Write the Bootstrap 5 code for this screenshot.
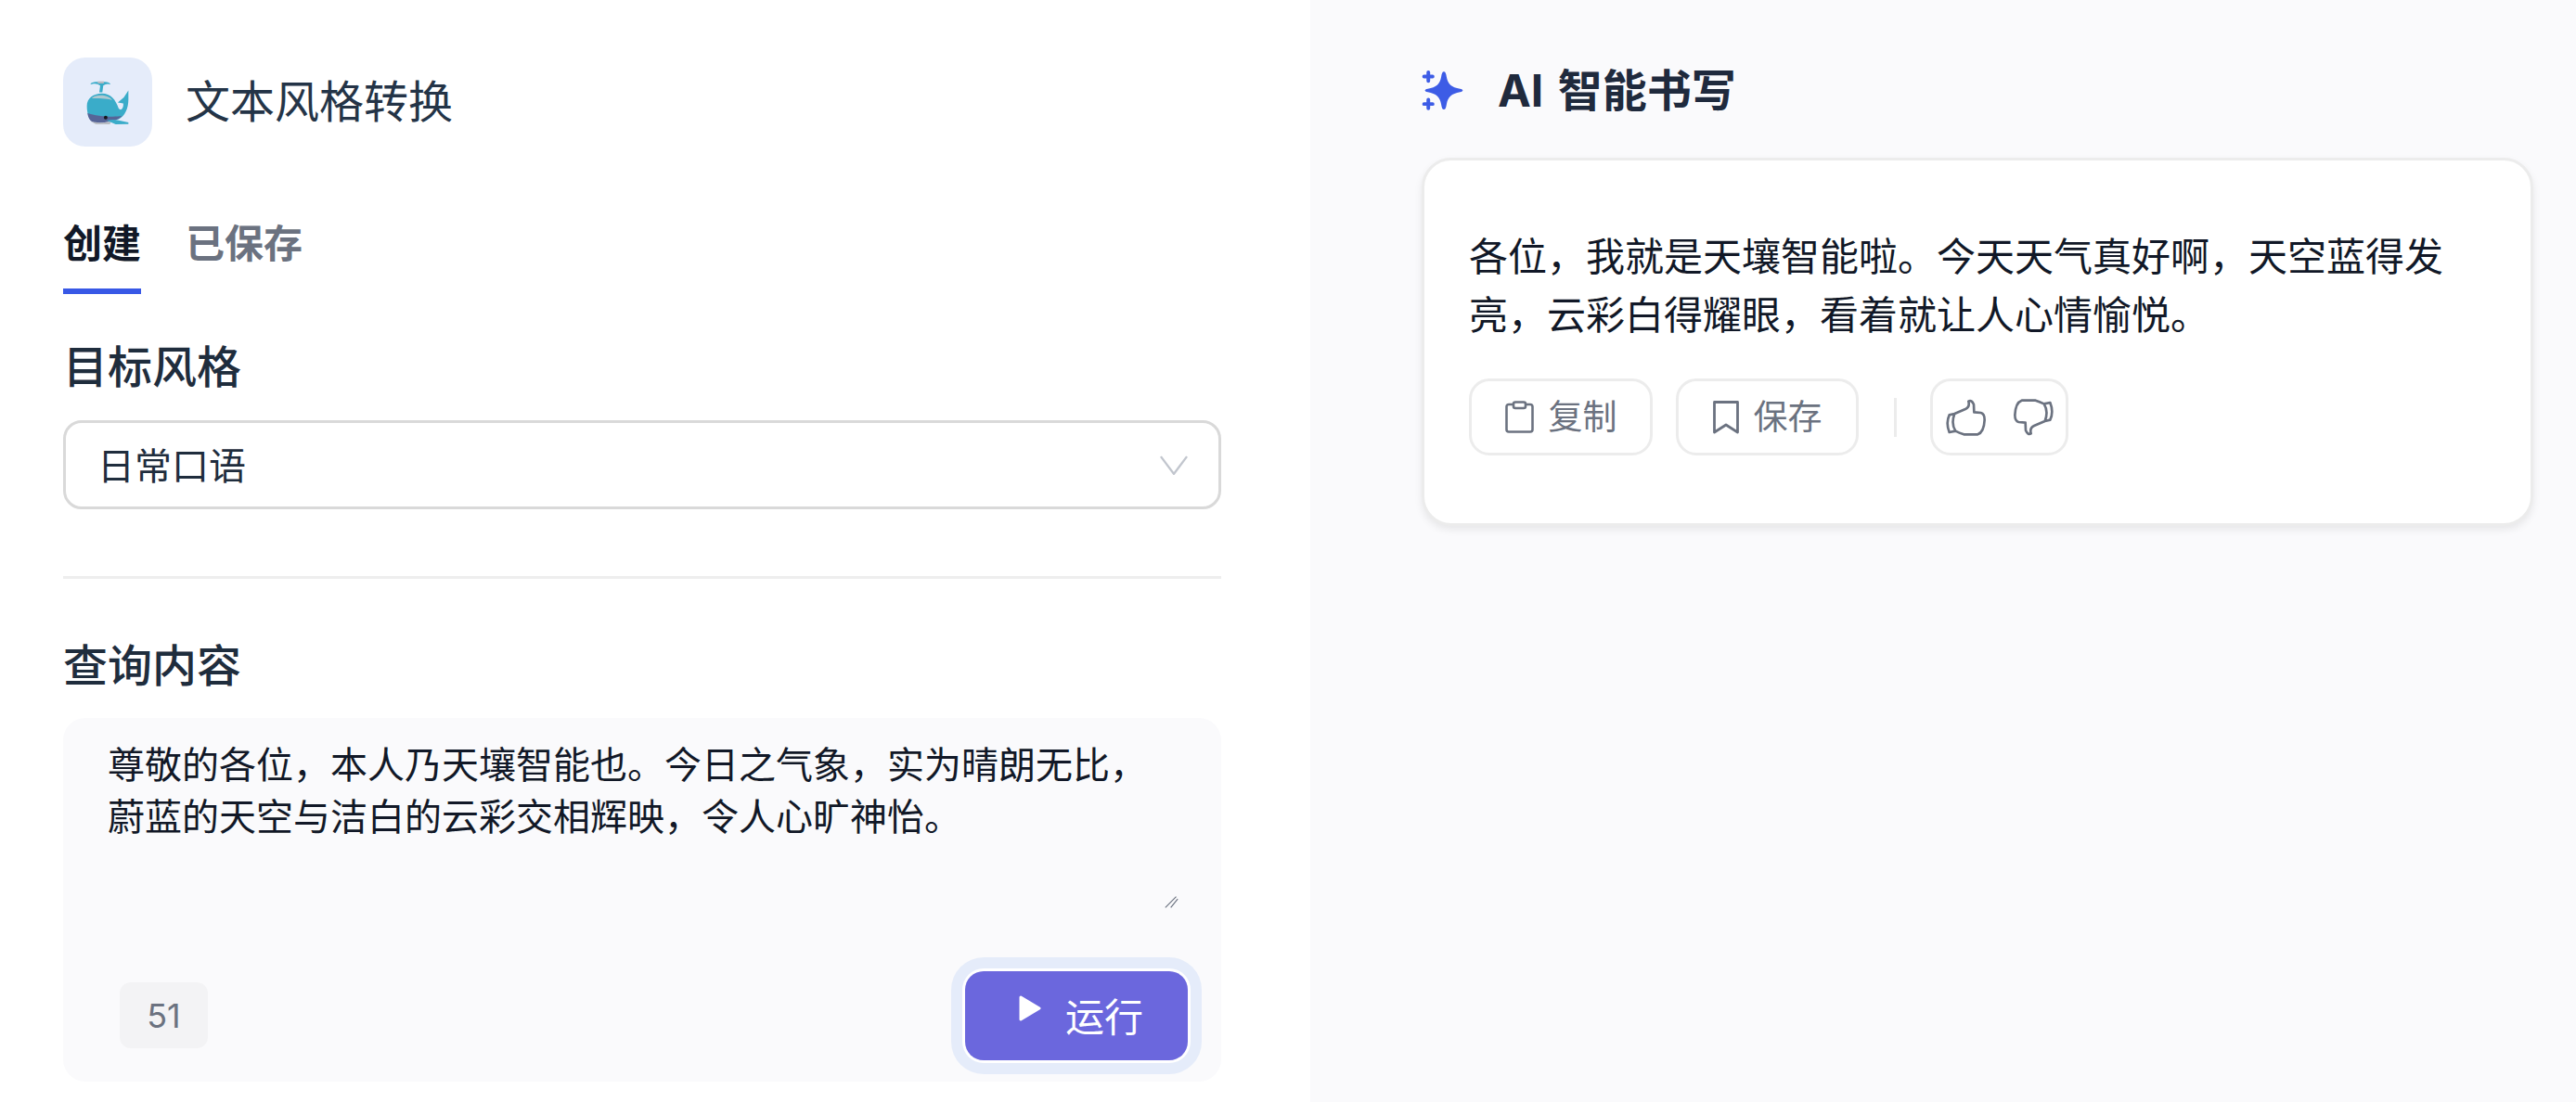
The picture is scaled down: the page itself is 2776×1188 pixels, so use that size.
<!DOCTYPE html>
<html lang="zh-CN">
<head>
<meta charset="utf-8">
<title>文本风格转换</title>
<link href="https://cdn.jsdelivr.net/npm/bootstrap@5.3.0/dist/css/bootstrap.min.css" rel="stylesheet">
<style>
html,body{height:100%}
body{font-family:Inter,"Noto Sans CJK SC",sans-serif;color:#1f2d3d;background:#fff;overflow:hidden}
.shell{height:100vh}
.pane-left{width:1412px;flex:none;padding:62px 96px 0 68px;background:#fff}
.pane-right{flex:1 1 auto;min-width:0;padding:66px 46px 0 120px;background:#fafafc}
.logo-box{width:96px;height:96px;border-radius:24px;background:#e5ecfa}
.app-title{font-size:48px;line-height:64px;font-weight:400;margin:0 0 0 36px;color:#243447}
.tab-row{margin-top:76px;gap:48px}
.tab-item{font-size:42px;line-height:58px;font-weight:700;color:#6b7280;padding-bottom:19px;border-bottom:6px solid transparent}
.tab-item.is-on{color:#111827;border-bottom-color:#3858e6}
.field-title{font-size:48px;line-height:64px;font-weight:500;color:#1f2d3d;margin:0}
.title-a{margin-top:47px;margin-bottom:25px}
.style-select{height:96px;border:3px solid #d9d9d9;border-radius:20px;font-size:40px;line-height:56px;color:#1f2d3d;padding:3px 60px 0 34px;background-image:url("data:image/svg+xml,%3csvg xmlns='http://www.w3.org/2000/svg' viewBox='0 0 32 22'%3e%3cpath fill='none' stroke='%23c2c6ce' stroke-width='2.5' d='M1 1l15 20L31 1'/%3e%3c/svg%3e");background-size:30px 21px;background-position:right 33px center;box-shadow:none}
.rule-line{margin:72px 0 0;border:0;border-top:3px solid #eeeeee;opacity:1}
.title-b{margin-top:62px;margin-bottom:24px}
.query-box{height:392px;border-radius:24px;background:#fafafc}
.query-text{display:block;width:1180px;height:198px;margin:8px 0 0 22px;padding:15px 26px 0;border:0;border-radius:0;background:transparent;font-size:40px;line-height:56px;color:#111827;resize:vertical;box-shadow:none}
.query-text:focus{background:transparent;box-shadow:none}
.query-text::-webkit-resizer{background:url("data:image/svg+xml,%3csvg xmlns='http://www.w3.org/2000/svg' viewBox='0 0 18 16'%3e%3cpath fill='none' stroke='%236b7280' stroke-width='1.4' d='M1 15L15 1M8 15L17 4'/%3e%3c/svg%3e") no-repeat center/100% 100%}
.query-foot{padding:0 36px 23px 61px}
.count-chip{width:95px;height:71px;margin-bottom:13px;border-radius:12px;background:#f3f3f5;color:#6b7280;font-size:36px}
.run-btn{width:240px;height:96px;padding:0 0 0 10px;border:0;border-radius:20px;background:#6b67dd;color:#fff;font-size:42px;line-height:56px;box-shadow:0 0 0 3px #fff,0 0 0 15px #e5ecfa;gap:26px}
.run-btn:hover,.run-btn:active{background:#6b67dd;color:#fff}
.spark{width:46px;height:46px;flex:none;margin-right:-2px}
.write-title{font-size:48px;line-height:64px;font-weight:700;margin:0 0 0 38px;color:#1f2a3d;word-spacing:4px}
.answer-card{margin-top:40px;height:397px;padding:72px 48px 0;border:3px solid #ececec;border-radius:32px;background:#fff;box-shadow:0 4px 8px rgba(0,0,0,.08)}
.answer-text{font-size:42px;line-height:63px;color:#111827;margin:0}
.act-row{margin-top:37px}
.act-btn{height:83px;padding:0;border:3px solid #ececec;border-radius:22px;background:#fff;color:#6b7280;font-size:37px;line-height:50px;gap:16px}
.act-btn:hover{background:#fff;color:#6b7280;border-color:#ececec}
.w-copy{width:198px;margin-right:25px}
.w-save{width:197px}
.w-thumb{width:149px;gap:30px}
.act-sep{width:3px;height:42px;background:#ececec;margin:0 36px 0 38px}
.ico-clip{width:31px;height:35px}
.ico-mark{width:28px;height:36px}
.ico-thumb{width:44px;height:40px}
.flip-hand{transform:rotate(180deg)}
</style>
</head>
<body>
<div class="shell d-flex">
  <main class="pane-left">
    <div class="d-flex align-items-center">
      <div class="logo-box d-flex align-items-center justify-content-center">
        <svg width="46" height="47" viewBox="100 88 137 144" aria-hidden="true">
          <path fill="#3aacc9" d="M100 172C100 145 122 130 150 130C178 130 195 150 205 180C214 190 222 176 220 163L202 160L222 143L237 120V150C237 180 225 205 205 215L130 224C110 222 100 200 100 172Z"/>
          <path fill="#d6d3d1" opacity=".75" d="M116 146C128 133 168 131 184 152C165 146 135 146 116 146Z"/>
          <path fill="#566497" d="M102 195C130 205 190 210 216 204C202 224 150 230 125 226C110 222 104 210 102 195Z"/>
          <path fill="#b9bcc2" d="M112 222C135 228 160 228 180 222L176 232H130Z"/>
          <path fill="#3aacc9" d="M165 219Q190 214 205 219L237 226L237 231L195 232Z"/>
          <circle cx="162" cy="210" r="6" fill="#15171c"/>
          <path fill="#3aacc9" d="M141 126L144 104Q134 96 122 98L112 100Q112 94 128 92H160Q174 92 178 100Q164 96 154 104L151 126Z"/>
          <path fill="#b9bcc2" d="M136 90H156V97H136Z"/>
        </svg>
      </div>
      <h1 class="app-title">文本风格转换</h1>
    </div>

    <div class="tab-row d-flex">
      <div class="tab-item is-on">创建</div>
      <div class="tab-item">已保存</div>
    </div>

    <h2 class="field-title title-a">目标风格</h2>
    <select class="form-select style-select" aria-label="目标风格">
      <option selected>日常口语</option>
    </select>

    <hr class="rule-line">

    <h2 class="field-title title-b">查询内容</h2>
    <div class="query-box d-flex flex-column">
      <textarea class="form-control query-text" aria-label="查询内容">尊敬的各位，本人乃天壤智能也。今日之气象，实为晴朗无比，蔚蓝的天空与洁白的云彩交相辉映，令人心旷神怡。</textarea>
      <div class="query-foot mt-auto d-flex justify-content-between align-items-end">
        <div class="count-chip d-flex align-items-center justify-content-center">51</div>
        <button type="button" class="btn run-btn d-flex align-items-center justify-content-center">
          <svg width="24" height="28" viewBox="0 0 24 28" class="mb-3" aria-hidden="true"><path fill="#fff" stroke="#fff" stroke-width="3" stroke-linejoin="round" d="M2 2L22 14L2 26Z"/></svg>
          <span class="mt-1">运行</span>
        </button>
      </div>
    </div>
  </main>

  <section class="pane-right">
    <div class="d-flex align-items-center">
      <svg class="spark" viewBox="100 105 140 140" aria-hidden="true">
        <path fill="#3d5ce6" d="M173 112C178 112 180 118 182 130C186 152 198 164 226 168C238 170 238 177 226 179C198 184 186 196 182 218C180 230 178 236 173 236C168 236 166 230 164 218C160 196 148 184 120 179C108 177 108 170 120 168C148 164 160 152 164 130C166 118 168 112 173 112Z"/>
        <path fill="none" stroke="#3d5ce6" stroke-width="12" stroke-linecap="round" d="M122 114V142M108 128H136M122 204V232M108 218H136"/>
      </svg>
      <h2 class="write-title">AI 智能书写</h2>
    </div>

    <div class="answer-card">
      <p class="answer-text">各位，我就是天壤智能啦。今天天气真好啊，天空蓝得发亮，云彩白得耀眼，看着就让人心情愉悦。</p>
      <div class="act-row d-flex align-items-center">
        <button type="button" class="btn act-btn w-copy d-flex align-items-center justify-content-center">
          <svg class="ico-clip" viewBox="0 0 31 35" aria-hidden="true"><path fill="none" stroke="#6b7280" stroke-width="2.6" stroke-linejoin="round" d="M9 4H4Q1.5 4 1.5 6.5V31Q1.5 33.500 4 33.500H27Q29.500 33.500 29.500 31V6.500Q29.500 4 27 4H22M11 1.500H20Q22 1.500 22 3.500V6Q22 8 20 8H11Q9 8 9 6V3.500Q9 1.500 11 1.500Z"/></svg>
          <span>复制</span>
        </button>
        <button type="button" class="btn act-btn w-save d-flex align-items-center justify-content-center">
          <svg class="ico-mark" viewBox="0 0 28 36" aria-hidden="true"><path fill="none" stroke="#6b7280" stroke-width="2.8" stroke-linejoin="round" d="M1.500 1.500H26.500V34L14 26L1.500 34Z"/></svg>
          <span>保存</span>
        </button>
        <div class="act-sep"></div>
        <button type="button" class="btn act-btn w-thumb d-flex align-items-center justify-content-center" aria-label="评价">
          <svg class="ico-thumb" viewBox="104 82 132 120" aria-hidden="true"><path fill="none" stroke="#6b7280" stroke-width="8" stroke-linejoin="round" stroke-linecap="round" d="M135 130L170 115Q185 108 180 90Q190 84 197 100L198 125L220 127Q232 130 232 150Q230 190 210 197L165 197Q150 192 138 186C128 170 128 148 135 130L118 134Q106 160 118 190L138 186"/></svg>
          <svg class="ico-thumb flip-hand" viewBox="104 82 132 120" aria-hidden="true"><path fill="none" stroke="#6b7280" stroke-width="8" stroke-linejoin="round" stroke-linecap="round" d="M135 130L170 115Q185 108 180 90Q190 84 197 100L198 125L220 127Q232 130 232 150Q230 190 210 197L165 197Q150 192 138 186C128 170 128 148 135 130L118 134Q106 160 118 190L138 186"/></svg>
        </button>
      </div>
    </div>
  </section>
</div>
<script src="https://cdn.jsdelivr.net/npm/bootstrap@5.3.0/dist/js/bootstrap.bundle.min.js"></script>
</body>
</html>
